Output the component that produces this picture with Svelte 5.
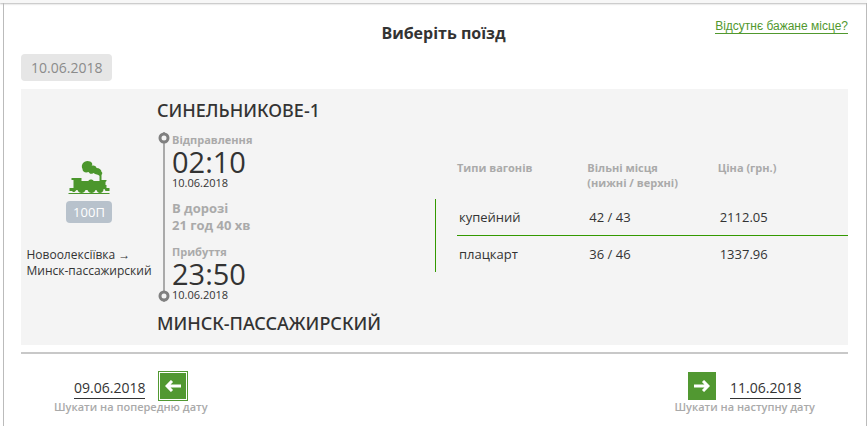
<script>
  const date = '10.06.2018'
  const train = {
    number: '100П',
    route: ['Новоолексіївка', 'Минск-пассажирский'],
    from: 'СИНЕЛЬНИКОВЕ-1',
    to: 'МИНСК-ПАССАЖИРСКИЙ',
    departure: '02:10',
    arrival: '23:50',
    duration: '21 год 40 хв'
  }
  const wagons = [
    { type: 'купейний', seats: '42 / 43', price: '2112.05' },
    { type: 'плацкарт', seats: '36 / 46', price: '1337.96' }
  ]
</script>

<div class="topbar"></div>
<main>
  <header>
    <h1>Виберіть поїзд</h1>
    <a class="missing" href="#missing">Відсутнє бажане місце?</a>
  </header>

  <div class="date">{date}</div>

  <section class="train">
    <div class="info">
      <svg class="loco" viewBox="0 0 41 34" width="42" height="34" aria-hidden="true">
        <path d="M14 8C12 4 15 0 19 0C23 0 25 3 23 5C25 4 28 5 28 7C31 7 33 9 33 11C34 11 34 13 33 14V19H38V20L37 21V24H38V27H41V30H37L36 28H35V29C34 33 29 33 28 29H27C26 33 20 33 19 29H17C16 33 10 33 9 29H8L6 31H4V30H1V27H5V19H3V17H13V20H20C20 18 25 18 25 20H31V15C30 13 27 14 25 12C22 14 21 12 20 11C17 12 14 11 14 8Z" />
        <path d="M0 32H41V33H0Z" />
      </svg>
      <span class="number">{train.number}</span>
      <p class="route">{train.route[0]} →<br />{train.route[1]}</p>
    </div>

    <div class="trip">
      <h2>{train.from}</h2>
      <div class="timeline">
        <svg class="dot" width="12" height="12" aria-hidden="true"><circle cx="6" cy="6" r="4" /></svg>
        <div class="stop">
          <span class="label">Відправлення</span>
          <span class="time">{train.departure}</span>
          <span class="day">{date}</span>
        </div>
        <div class="duration">В дорозі<br />{train.duration}</div>
        <div class="stop">
          <span class="label">Прибуття</span>
          <span class="time">{train.arrival}</span>
          <span class="day">{date}</span>
        </div>
        <svg class="dot end" width="12" height="12" aria-hidden="true"><circle cx="6" cy="6" r="4" /></svg>
      </div>
      <h2>{train.to}</h2>
    </div>

    <table>
      <thead>
        <tr>
          <td class="rail"></td>
          <th>Типи вагонів</th>
          <th>Вільні місця<br />(нижні / верхні)</th>
          <th>Ціна (грн.)</th>
        </tr>
      </thead>
      <tbody>
        {#each wagons as wagon, i}
          <tr>
            {#if i === 0}
              <td class="rail" rowspan={wagons.length}></td>
            {/if}
            <td class="cell">{wagon.type}</td>
            <td class="cell">{wagon.seats}</td>
            <td class="cell">{wagon.price}</td>
          </tr>
        {/each}
      </tbody>
    </table>
  </section>

  <nav>
    <div class="other">
      <div class="pick">
        <a href="#prev">09.06.2018</a>
        <button class="focused" aria-label="Попередня дата">
          <svg width="16" height="12" viewBox="0 0 16 12"><path d="M16 6H2M7 1L2 6L7 11" /></svg>
        </button>
      </div>
      <span class="hint">Шукати на попередню дату</span>
    </div>
    <div class="other">
      <div class="pick">
        <button aria-label="Наступна дата">
          <svg width="16" height="12" viewBox="0 0 16 12"><path d="M0 6H14M9 1L14 6L9 11" /></svg>
        </button>
        <a href="#next">11.06.2018</a>
      </div>
      <span class="hint">Шукати на наступну дату</span>
    </div>
  </nav>
</main>

<style>
  :global(body) {
    margin: 0;
    background: #fff;
    font-family: 'Open Sans', sans-serif;
    color: #333;
  }
  .topbar {
    height: 3px;
    background: #f7f7f7;
    box-shadow: 0 1px 2px #bbb;
    position: relative;
  }
  main {
    margin-left: 3px;
    padding: 16px 18px 12px 17px;
    border: solid #bbb;
    border-width: 0 1px;
  }
  header {
    display: grid;
    grid-template-columns: 1fr auto 1fr;
    align-items: start;
    height: 35px;
  }
  h1 {
    grid-column: 2;
    margin: 0;
    padding-left: 18px;
    font-size: 16px;
    line-height: 28px;
    font-weight: 700;
  }
  .missing {
    justify-self: end;
    margin-top: 1px;
    font: 12px/13px 'Liberation Sans', Arial, sans-serif;
    color: #51982e;
    text-decoration: none;
    border-bottom: 1px solid #51982e;
  }
  .date {
    width: fit-content;
    padding: 0 10px;
    border-radius: 4px;
    background: #e6e6e6;
    color: #8b8b8b;
    font-size: 14px;
    line-height: 27px;
  }
  .train {
    display: flex;
    margin-top: 8px;
    background: #f4f4f4;
  }
  .info {
    flex: none;
    width: 136px;
    padding-top: 72px;
    display: flex;
    flex-direction: column;
    align-items: center;
  }
  .loco {
    fill: #4b962c;
  }
  .number {
    margin-top: 6px;
    padding: 0 7px;
    border-radius: 4px;
    background: #b8c2cc;
    color: #fff;
    font-size: 13px;
    line-height: 22px;
  }
  .route {
    margin: 24px 0 0;
    font-size: 12px;
    line-height: 16px;
    white-space: nowrap;
  }
  .trip {
    flex: 1;
    padding: 9px 0;
  }
  h2 {
    margin: 0;
    font-family: 'Noto Sans', 'Open Sans', sans-serif;
    font-size: 18px;
    line-height: 25px;
    font-weight: 500;
    white-space: nowrap;
  }
  .timeline {
    position: relative;
    margin: 9px 0 9px 6px;
    padding: 1px 0 0 7px;
    border-left: 2px solid #aaa;
    height: 169px;
    display: flex;
    flex-direction: column;
    gap: 11px;
  }
  .dot {
    position: absolute;
    left: -7px;
    top: 0;
    fill: #f4f4f4;
    stroke: #808080;
    stroke-width: 3px;
  }
  .dot.end {
    top: auto;
    bottom: 0;
  }
  .stop {
    display: flex;
    flex-direction: column;
  }
  .label {
    font-size: 11px;
    line-height: 14px;
    font-weight: 700;
    color: #aaa;
  }
  .time {
    font-size: 29px;
    line-height: 29px;
  }
  .day {
    font-size: 11px;
    line-height: 13px;
  }
  .duration {
    font-size: 13px;
    line-height: 17px;
    font-weight: 700;
    color: #aaa;
  }
  table {
    flex: none;
    align-self: flex-start;
    margin-top: 71px;
    border-spacing: 0;
    table-layout: fixed;
    width: 413px;
  }
  th,
  td {
    padding: 0;
    text-align: left;
  }
  th {
    height: 39px;
    vertical-align: top;
    font-size: 11px;
    line-height: 15px;
    color: #aaa;
  }
  .rail {
    width: 22px;
  }
  tbody .rail {
    border-left: 1px solid #390;
  }
  .cell {
    height: 36px;
    padding-left: 2px;
    font-size: 13px;
    line-height: 18px;
  }
  tbody tr:not(:last-child) .cell {
    border-bottom: 1px solid #390;
  }
  nav {
    display: flex;
    justify-content: space-between;
    margin-top: 7px;
    padding: 18px 33px 0;
    border-top: 2px solid #c8c8c8;
  }
  .other {
    display: flex;
    flex-direction: column;
    align-items: center;
  }
  .pick {
    display: flex;
    align-items: center;
    gap: 14px;
  }
  .pick a {
    margin-top: 4px;
    color: #333;
    font-size: 14px;
    line-height: 20px;
    text-decoration: none;
    border-bottom: 1px solid #333;
  }
  button {
    display: grid;
    place-items: center;
    width: 28px;
    height: 28px;
    padding: 0;
    border: 0;
    background: #519831;
  }
  button.focused {
    border: 1px solid #fff;
    outline: 1px solid #519831;
  }
  button path {
    fill: none;
    stroke: #fff;
    stroke-width: 3px;
  }
  .hint {
    font-size: 11px;
    line-height: 14px;
    font-weight: 600;
    color: #aaa;
  }
</style>
